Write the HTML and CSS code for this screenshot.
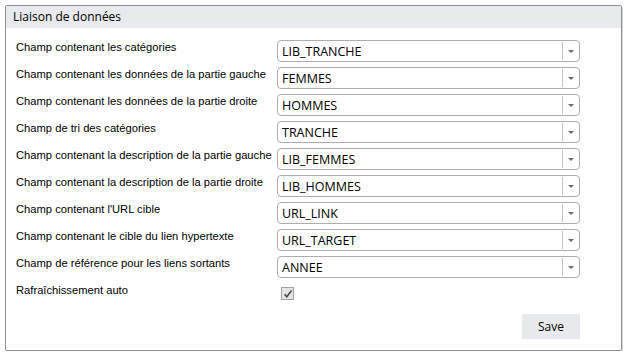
FILE: index.html
```html
<!DOCTYPE html>
<html lang="fr">
<head>
  <meta charset="UTF-8">
  <title>Liaison de données</title>
  <link rel="stylesheet" href="styles.css">
</head>
<body>
  <div class="panel">
    <div class="panel-header">Liaison de données</div>
    <div class="panel-body">
      <div class="field-row">
        <label>Champ contenant les catégories</label>
        <div class="combo"><span class="combo-value">LIB_TRANCHE</span><span class="combo-btn"></span></div>
      </div>
      <div class="field-row">
        <label>Champ contenant les données de la partie gauche</label>
        <div class="combo"><span class="combo-value">FEMMES</span><span class="combo-btn"></span></div>
      </div>
      <div class="field-row">
        <label>Champ contenant les données de la partie droite</label>
        <div class="combo"><span class="combo-value">HOMMES</span><span class="combo-btn"></span></div>
      </div>
      <div class="field-row">
        <label>Champ de tri des catégories</label>
        <div class="combo"><span class="combo-value">TRANCHE</span><span class="combo-btn"></span></div>
      </div>
      <div class="field-row">
        <label>Champ contenant la description de la partie gauche</label>
        <div class="combo"><span class="combo-value">LIB_FEMMES</span><span class="combo-btn"></span></div>
      </div>
      <div class="field-row">
        <label>Champ contenant la description de la partie droite</label>
        <div class="combo"><span class="combo-value">LIB_HOMMES</span><span class="combo-btn"></span></div>
      </div>
      <div class="field-row">
        <label>Champ contenant l'URL cible</label>
        <div class="combo"><span class="combo-value">URL_LINK</span><span class="combo-btn"></span></div>
      </div>
      <div class="field-row">
        <label>Champ contenant le cible du lien hypertexte</label>
        <div class="combo"><span class="combo-value">URL_TARGET</span><span class="combo-btn"></span></div>
      </div>
      <div class="field-row">
        <label>Champ de référence pour les liens sortants</label>
        <div class="combo"><span class="combo-value">ANNEE</span><span class="combo-btn"></span></div>
      </div>
      <div class="field-row check-row">
        <label>Rafraîchissement auto</label>
        <span class="checkbox">
          <svg width="10" height="10" viewBox="0 0 10 10"><path d="M1.5 5.2 L3.8 7.8 L8.6 1.6" fill="none" stroke="#4a4a4a" stroke-width="1.6"/></svg>
        </span>
      </div>
      <div class="actions">
        <button type="button" class="save-btn">Save</button>
      </div>
    </div>
  </div>
</body>
</html>
```

FILE: styles.css
```css
body {
  margin: 0;
  background: #fff;
  font-family: "Open Sans", "Liberation Sans", sans-serif;
  color: #000;
}

.panel {
  margin: 5px 0 0 5px;
  width: 615px;
  height: 344px;
  border: 1px solid #8c8f93;
  border-radius: 2px;
  box-shadow: 1px 1px 0 #d8d8d8;
  display: flex;
  flex-direction: column;
}

.panel-header {
  height: 22px;
  line-height: 21px;
  background: #e9eaed;
  padding-left: 7px;
  font-size: 12px;
}

.panel-body {
  padding: 12px 0 0 10px;
  display: flex;
  flex-direction: column;
  gap: 5px;
}

.field-row {
  display: grid;
  grid-template-columns: 261px 303px;
  height: 22px;
}

.field-row label {
  font-family: "Liberation Sans", Arial, sans-serif;
  font-size: 11.2px;
  line-height: 14px;
  white-space: nowrap;
}

.combo {
  display: flex;
  height: 22px;
  box-sizing: border-box;
  border: 1px solid #adadad;
  border-radius: 4px;
  background: #fff;
}

.combo-value {
  flex: 1;
  padding-left: 4px;
  font-size: 12.5px;
  line-height: 21px;
}

.combo-btn {
  width: 16px;
  border-left: 1px solid #c4c4c4;
  margin: 1px 0;
  position: relative;
}

.combo-btn::after {
  content: "";
  position: absolute;
  left: 5px;
  top: 8px;
  border-left: 3px solid transparent;
  border-right: 3px solid transparent;
  border-top: 3px solid #6b6b6b;
}

.checkbox {
  width: 11px;
  height: 11px;
  margin: 4px 0 0 4px;
  border: 1px solid #a3a3a3;
  background: #e4e4e4;
  display: flex;
  align-items: center;
  justify-content: center;
}

.actions {
  display: flex;
  justify-content: flex-end;
  padding-right: 41px;
  margin-top: 4px;
}

.save-btn {
  width: 58px;
  height: 25px;
  border: none;
  background: #e8e9ec;
  font-family: "Open Sans", "Liberation Sans", sans-serif;
  font-size: 12px;
  color: #000;
  padding: 0;
}
```
